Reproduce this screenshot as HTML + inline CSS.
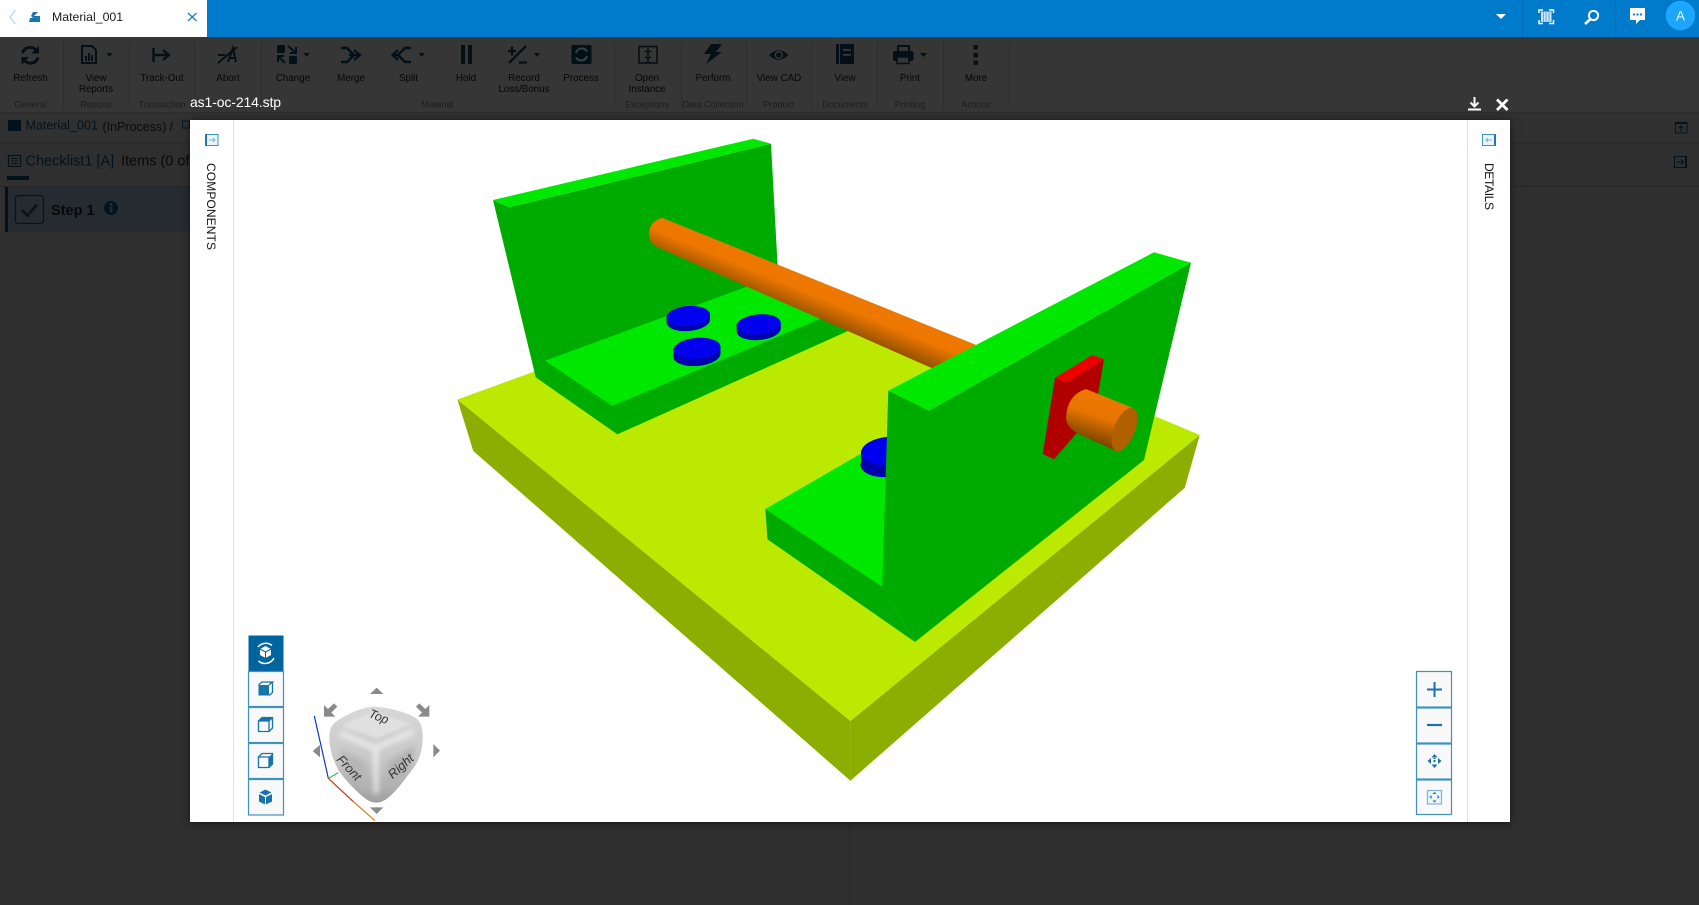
<!DOCTYPE html>
<html lang="en"><head><meta charset="utf-8"><title>as1-oc-214.stp</title>
<style>
html,body{margin:0;padding:0;width:1699px;height:905px;overflow:hidden;background:#2f2f2f}
svg{display:block;position:absolute;left:0;top:0;font-family:"Liberation Sans",sans-serif}
.d{position:absolute}
.l{font-size:9.8px;fill:#060606;text-anchor:middle}
.g{font-size:9px;fill:#1c1c1c;text-anchor:middle}
.i{fill:#031018}
.s{fill:none;stroke:#031018;stroke-width:3}
.c{fill:#1f1f1f}
.b{fill:#f9f9f9;stroke:#3f92bd;stroke-width:1.2}
.bi{fill:#1873a8}
.bs{fill:none;stroke:#1873a8;stroke-width:1.3}
</style></head><body>
<div class="d" style="left:0;top:37px;width:1699px;height:75px;background:#363636"></div>
<div class="d" style="left:0;top:112px;width:1699px;height:1px;background:#2c2c2c"></div>
<div class="d" style="left:0;top:113px;width:1699px;height:29px;background:#313131"></div>
<div class="d" style="left:0;top:142px;width:1699px;height:1px;background:#282828"></div>
<div class="d" style="left:0;top:186px;width:1699px;height:1px;background:#262626"></div>
<div class="d" style="left:849px;top:822px;width:1px;height:83px;background:#292929"></div>
<div class="d" style="left:0;top:0;width:1699px;height:37px;background:#007acb"></div>
<div class="d" style="left:0;top:0;width:207px;height:37px;background:#fff"></div>

<svg width="1699" height="905" viewBox="0 0 1699 905">
<!-- header -->
<path d="M15.5 10 L10 17 L15.5 24" fill="none" stroke="#bcd9ec" stroke-width="1.4"/>
<path d="M33 12 L38 12 L34 16 L40 16 L40 22 L29 22 L30 18 L33 18 L31 16 Z" fill="#1d75ad"/>
<text x="52" y="21" font-size="12.3" fill="#1b1b1b">Material_001</text>
<path d="M188 13 L196.5 21 M196.5 13 L188 21" stroke="#1f80bf" stroke-width="1.3" fill="none"/>
<rect x="1522" width="1" height="37" fill="#006eb6"/>
<rect x="1615" width="1" height="37" fill="#006eb6"/>
<path d="M1496 14 L1506 14 L1501 19 Z" fill="#fff"/>
<g fill="none" stroke="#fff" stroke-width="1.5"><path d="M1539 13 V10 H1543 M1549 10 H1553.5 V13 M1553.5 20 V23.5 H1549 M1543 23.5 H1539 V20"/></g>
<rect x="1541" y="11.5" width="10.5" height="10.5" fill="#cfe6f5"/>
<g fill="#5ba8da"><rect x="1543" y="11.5" width="1" height="10.5"/><rect x="1545.5" y="11.5" width="1" height="10.5"/><rect x="1548.5" y="11.5" width="1" height="10.5"/></g>
<circle cx="1593.5" cy="15.5" r="4.6" fill="none" stroke="#fff" stroke-width="2"/><path d="M1590 19.5 L1585 24" stroke="#fff" stroke-width="2.6" fill="none"/>
<path d="M1630 8 H1645 V20 H1640 L1636 24 V20 H1630 Z" fill="#fff"/>
<g fill="#007acb"><circle cx="1634" cy="14.5" r="1.1"/><circle cx="1637.5" cy="14.5" r="1.1"/><circle cx="1641" cy="14.5" r="1.1"/></g>
<circle cx="1680.5" cy="15.5" r="14.7" fill="#1ca6ff"/>
<text x="1680.5" y="20.5" font-size="13.5" fill="#fff" text-anchor="middle">A</text>

<!-- toolbar separators -->
<g fill="#2d2d2d"><rect x="63" y="41" width="1" height="67"/><rect x="129" y="41" width="1" height="67"/><rect x="194" y="41" width="1" height="67"/><rect x="261" y="41" width="1" height="67"/><rect x="614" y="41" width="1" height="67"/><rect x="681" y="41" width="1" height="67"/><rect x="746" y="41" width="1" height="67"/><rect x="811" y="41" width="1" height="67"/><rect x="877" y="41" width="1" height="67"/><rect x="943" y="41" width="1" height="67"/><rect x="1009" y="41" width="1" height="67"/></g>

<!-- toolbar icons -->
<path class="s" d="M22.5 53 A8 8 0 0 1 36.5 50.5 M38 57.5 A8 8 0 0 1 24 60"/><path class="i" d="M39 45.5 V53.5 H31.5 Z M21.5 65 V57 H29 Z"/>
<path class="s" d="M82 46 H92 L96 50 V63 H82 Z" style="stroke-width:2"/><rect class="i" x="85" y="56" width="2" height="5"/><rect class="i" x="88" y="53" width="2" height="8"/><rect class="i" x="91" y="55" width="2" height="6"/>
<path class="i" d="M106.5 53 H112.5 L109.5 57 Z"/>
<path class="s" style="stroke-width:2.4" d="M153.5 48 V62 M155 55 H168"/><path class="s" style="stroke-width:2.2" d="M163 50 L169 55 L163 60"/>
<path class="s" style="stroke-width:2" d="M218 63 L237 47 M218 55 H225 M228 62 L233 48 L236 62 M229 58 H235"/>
<rect class="i" x="277" y="45" width="8" height="8" rx="1.5"/><rect class="i" x="289" y="56" width="8" height="8" rx="1.5"/><path class="s" style="stroke-width:2" d="M288 46 L296 53 M296 47 V53 H290 M285 63 L278 56 M278 62 V56 H284"/>
<path class="i" d="M303.5 53 H310 L306.7 57 Z"/>
<path class="s" style="stroke-width:2.4" d="M341 48 H347 L354 55 L347 62 H341 M349 55 H359"/><path class="s" style="stroke-width:2.2" d="M354 50 L360 55 L354 60"/>
<path class="s" style="stroke-width:2.4" d="M398 55 L405 48 H411 M398 55 L405 62 H411 M394 55 H399"/><path class="s" style="stroke-width:2.2" d="M398 50 L392.5 55 L398 60"/>
<path class="i" d="M418.5 53 H425 L421.7 57 Z"/>
<rect class="i" x="461" y="45" width="4" height="19"/><rect class="i" x="468" y="45" width="4" height="19"/>
<path class="s" style="stroke-width:2.3" d="M508 51 H516 M512 46.5 V55.5 M509 63 L526 46 M519 62.5 H527"/>
<path class="i" d="M534 53 H540 L537 57 Z"/>
<rect class="i" x="571.5" y="45" width="20" height="19" rx="1.5"/><g fill="none" stroke="#36434c" stroke-width="2"><path d="M576 53 A6 6 0 0 1 587 51.5 M587 56 A6 6 0 0 1 576 57.5"/></g>
<rect x="639" y="46.5" width="18" height="16.5" fill="none" stroke="#031018" stroke-width="1.6"/><path d="M648 46 V50 M648 52 V56 M648 58 V63" stroke="#031018" stroke-width="1.6" fill="none"/><rect class="i" x="645" y="50.5" width="6" height="1.6"/><rect class="i" x="645" y="56.5" width="6" height="1.6"/>
<path class="i" d="M711 44 H722 L716 52 H722 L706 64 L711 54 H704 Z"/>
<path class="i" d="M769 55 Q778.5 45.5 788.5 55 Q778.5 64.5 769 55 Z"/><circle cx="778.8" cy="55" r="4.2" fill="#363636"/><circle cx="778.8" cy="55" r="2.6" fill="#031018"/>
<rect class="i" x="836" y="44" width="3" height="20"/><rect class="i" x="840" y="44" width="14" height="20"/><rect x="843" y="49" width="8" height="1.8" fill="#363636"/><rect x="843" y="54" width="8" height="1.8" fill="#363636"/>
<rect x="898" y="46" width="11" height="6" fill="none" stroke="#031018" stroke-width="2"/><rect class="i" x="893" y="51" width="20.5" height="10" rx="2"/><rect x="897" y="57" width="12" height="6.5" fill="#363636" stroke="#031018" stroke-width="1.5"/>
<path class="i" d="M920 53 H927 L923.5 57 Z"/>
<rect class="i" x="973.5" y="45" width="4.4" height="4.4"/><rect class="i" x="973.5" y="53" width="4.4" height="4.4"/><rect class="i" x="973.5" y="60.5" width="4.4" height="4.4"/>

<!-- toolbar labels -->
<text class="l" x="30.5" y="81">Refresh</text>
<text class="l" x="96" y="81">View</text><text class="l" x="96" y="92">Reports</text>
<text class="l" x="162" y="81">Track-Out</text>
<text class="l" x="228" y="81">Abort</text>
<text class="l" x="293" y="81">Change</text>
<text class="l" x="351" y="81">Merge</text>
<text class="l" x="408.5" y="81">Split</text>
<text class="l" x="466" y="81">Hold</text>
<text class="l" x="524" y="81">Record</text><text class="l" x="524" y="92">Loss/Bonus</text>
<text class="l" x="581" y="81">Process</text>
<text class="l" x="647" y="81">Open</text><text class="l" x="647" y="92">Instance</text>
<text class="l" x="713" y="81">Perform</text>
<text class="l" x="779" y="81">View CAD</text>
<text class="l" x="845" y="81">View</text>
<text class="l" x="910" y="81">Print</text>
<text class="l" x="976" y="81">More</text>
<text class="g" x="30.5" y="107.5">General</text>
<text class="g" x="96" y="107.5">Reports</text>
<text class="g" x="162" y="107.5">Transaction</text>
<text class="g" x="437.5" y="107.5">Material</text>
<text class="g" x="647" y="107.5">Exceptions</text>
<text class="g" x="713" y="107.5">Data Collection</text>
<text class="g" x="779" y="107.5">Product</text>
<text class="g" x="845" y="107.5">Documents</text>
<text class="g" x="910" y="107.5">Printing</text>
<text class="g" x="976" y="107.5">Actions</text>

<!-- breadcrumb + checklist -->
<rect x="8" y="120" width="13" height="11" fill="#01121d"/>
<text x="25.5" y="129.5" font-size="12.5" fill="#04121b">Material_001</text>
<text x="102.5" y="131" font-size="12.5" fill="#0a0a0a">(InProcess)</text>
<text x="169.5" y="131" font-size="12.5" fill="#0a0a0a">/</text>
<rect x="182.5" y="121" width="7" height="7" fill="none" stroke="#04121b" stroke-width="1"/>
<rect x="8.5" y="155.5" width="12" height="11" fill="none" stroke="#06121a" stroke-width="1.2"/><path d="M11 158.5 H18 M11 161 H18 M11 163.5 H18" stroke="#06121a" stroke-width="1"/>
<text x="25.5" y="165.5" font-size="14.5" fill="#04121b">Checklist1 [A]</text>
<text x="121" y="165.5" font-size="14.5" fill="#080808">Items (0 of</text>
<rect x="7" y="176" width="22" height="4" fill="#02121c"/>
<rect x="5" y="187" width="185" height="45" fill="#252b30"/>
<rect x="5" y="187" width="3" height="45" fill="#02121c"/>
<rect x="15.5" y="195.5" width="28" height="28" rx="3" fill="none" stroke="#03141e" stroke-width="1.2"/>
<path d="M22 210 L27.5 215.5 L37 204.5" fill="none" stroke="#03141e" stroke-width="2.6"/>
<text x="51" y="215" font-size="14.5" font-weight="bold" fill="#080808">Step 1</text>
<circle cx="111" cy="208" r="7" fill="#03141e"/><rect x="109.8" y="206.5" width="2.6" height="6" fill="#252b30"/><rect x="109.8" y="203" width="2.6" height="2.4" fill="#252b30"/>

<!-- right bg icons -->
<rect x="1675.5" y="122.5" width="11.5" height="10.5" fill="none" stroke="#04121b" stroke-width="1"/><rect x="1675" y="122" width="12" height="2" fill="#04121b"/><path d="M1681 132 V126 M1678.5 128.5 L1681 126 L1683.5 128.5" stroke="#04121b" fill="none"/>
<rect x="1674.5" y="156.5" width="11.5" height="11" fill="none" stroke="#04121b" stroke-width="1"/><rect x="1685" y="156" width="2" height="12" fill="#04121b"/><path d="M1677 162 H1683 M1681 159.5 L1683.5 162 L1681 164.5" stroke="#04121b" fill="none"/>

<!-- modal chrome -->
<text x="190" y="107" font-size="14" fill="#fff" textLength="91">as1-oc-214.stp</text>
<path d="M1474.5 97 V106 M1470.5 102.5 L1474.5 106.5 L1478.5 102.5" fill="none" stroke="#fff" stroke-width="2"/><rect x="1468" y="108.5" width="13" height="2" fill="#fff"/>
<path d="M1497 99.5 L1507.5 110 M1507.5 99.5 L1497 110" stroke="#fff" stroke-width="2.8"/>
</svg>

<div class="d" style="left:190px;top:120px;width:1320px;height:702px;background:#fff;box-shadow:0 1px 8px rgba(0,0,0,.55)"></div>

<svg width="1699" height="905" viewBox="0 0 1699 905">
<defs>
<linearGradient id="rod" gradientUnits="userSpaceOnUse" x1="850" y1="293" x2="836" y2="327"><stop offset="0" stop-color="#ee7700"/><stop offset=".42" stop-color="#ee7700"/><stop offset="1" stop-color="#985400"/></linearGradient>
<linearGradient id="stub" gradientUnits="userSpaceOnUse" x1="1102" y1="396" x2="1088" y2="440"><stop offset="0" stop-color="#ee7700"/><stop offset=".45" stop-color="#e87400"/><stop offset="1" stop-color="#7a4600"/></linearGradient>
<linearGradient id="cb" x1="0" y1="0" x2="0" y2="1"><stop offset="0" stop-color="#d8d8d8"/><stop offset=".55" stop-color="#c8c8c8"/><stop offset="1" stop-color="#a0a0a0"/></linearGradient>
<filter id="bl" x="-40%" y="-40%" width="180%" height="180%"><feGaussianBlur stdDeviation="8"/></filter>
<filter id="bl2" x="-30%" y="-30%" width="160%" height="160%"><feGaussianBlur stdDeviation="4"/></filter>
</defs>
<rect x="233" y="120" width="1" height="702" fill="#e2e2e2"/>
<rect x="1467" y="120" width="1" height="702" fill="#e2e2e2"/>
<rect x="205.5" y="134.5" width="12.5" height="11" fill="#eef5fa" stroke="#3f92bd" stroke-width="1"/><rect x="205" y="134" width="2" height="12" fill="#1d7ab3"/><path d="M209 140 H215 M213 138 L215 140 L213 142" stroke="#7fb3d2" fill="none"/>
<rect x="1482.5" y="134.5" width="13" height="11" fill="#eef5fa" stroke="#3f92bd" stroke-width="1"/><rect x="1494" y="134" width="2" height="12" fill="#1d7ab3"/><path d="M1492 140 H1486 M1488 138 L1486 140 L1488 142" stroke="#7fb3d2" fill="none"/>
<text transform="translate(207,163) rotate(90)" font-size="12" fill="#111" textLength="87">COMPONENTS</text>
<text transform="translate(1485,163) rotate(90)" font-size="12" fill="#111" textLength="47">DETAILS</text>

<!-- model: base -->
<polygon points="457.4,399.5 473.3,451 850.4,780.7 850.4,721" fill="#8cae00"/>
<polygon points="850.4,721 850.4,780.7 1184.8,487.7 1199.7,435" fill="#8cae00"/>
<polygon points="457.4,399.5 533,372 760,290 860,320 1157,417 1199.7,435 850.4,721" fill="#bbe900"/>

<!-- left bracket -->
<polygon points="493,200 509,207.3 771,143.7 777.5,264 850,330 617.3,434.3 535.7,377.3" fill="#00ab00"/>
<polygon points="493,200 753.3,138.7 771,143.7 509,207.3" fill="#00e800"/>
<polygon points="545,360.7 746.7,286.7 830,315 612.3,406" fill="#00e800"/>
<polygon points="830,315 850,330 617.3,434.3 612.3,406" fill="#00ab00"/>

<!-- left discs -->
<g>
<path d="M666.6 316 V322 A21.7 10 -5 0 0 710 320 V314 Z" fill="#0000ac"/><ellipse cx="688.3" cy="316" rx="21.7" ry="10" transform="rotate(-5 688.3 316)" fill="#0000ee"/>
<path d="M736.7 324 V331 A22 10 -5 0 0 780.7 329 V322 Z" fill="#0000ac"/><ellipse cx="758.7" cy="324.3" rx="22" ry="10" transform="rotate(-5 758.7 324.3)" fill="#0000ee"/>
<path d="M673.5 349 V357 A23.5 10.5 -5 0 0 720.5 354 V346 Z" fill="#0000ac"/><ellipse cx="697" cy="348.3" rx="23.5" ry="10.5" transform="rotate(-5 697 348.3)" fill="#0000ee"/>
</g>

<!-- long rod -->
<path d="M662 217.7 Q649 222 649 234 Q649.5 244 657 247 L935 369.5 L980 346.5 Z" fill="url(#rod)"/>

<!-- right bracket foot -->
<polygon points="765.4,509 850,460 888,438 888,600 882.3,586.7" fill="#00e800"/>
<polygon points="765.4,509 767.4,539.3 915,642 882.3,586.7" fill="#00ab00"/>
<path d="M861 452 V462 A27 14 -5 0 0 888 477 H895 V445 Z" fill="#0000ac"/>
<ellipse cx="888" cy="451" rx="27" ry="14" transform="rotate(-5 888 451)" fill="#0000ee"/>

<!-- right wall -->
<polygon points="888.3,390.7 929,410.7 1191,262.7 1144,460 915,642 882.3,586.7" fill="#00ab00"/>
<polygon points="888.3,390.7 1154,252.3 1191,262.7 929,410.7" fill="#00e800"/>

<!-- red plate -->
<polygon points="1055,377.7 1067.3,382.7 1104,359.3 1095,412 1054,459.3 1042.7,454" fill="#b00000"/>
<polygon points="1055,377.7 1092.3,355 1104,359.3 1067.3,382.7" fill="#ee0000"/>

<!-- stub -->
<path d="M1086 389 L1133 408 L1116 451 L1085 437 Q1067 430 1066 418 Q1067 395 1086 389 Z" fill="url(#stub)"/>
<ellipse cx="1124.5" cy="429.5" rx="10.5" ry="23" transform="rotate(22 1124.5 429.5)" fill="#b06000"/>

<!-- view buttons left -->
<rect x="248.5" y="635.5" width="35" height="36" fill="#00649f"/>
<rect class="b" x="248.5" y="671.5" width="35" height="35"/>
<rect class="b" x="248.5" y="707.5" width="35" height="35"/>
<rect class="b" x="248.5" y="743.5" width="35" height="35"/>
<rect class="b" x="248.5" y="779.5" width="35" height="35.5"/>
<path d="M265.5 646 L271 649 V655 L265.5 658 L260 655 V649 Z" fill="#fff"/>
<path d="M260 649 L265.5 652 L271 649 M265.5 652 V658" stroke="#00649f" fill="none"/>
<path d="M258 647 A10 10 0 0 1 272 645.5 M274 658 A10 10 0 0 1 258.5 661" fill="none" stroke="#fff" stroke-width="1.5"/>
<path d="M258.5 685 H269 V695.5 H258.5 Z" fill="#1873a8"/><path class="bs" d="M258.5 685 L262 682 H272.5 L269 685 M272.5 682 V692.5 L269 695.5"/>
<path class="bs" d="M258.5 721 H269 V731.5 H258.5 Z M258.5 721 L262 717.5 H272.5 V728 L269 731.5 M269 721 L272.5 717.5"/><path d="M258.5 721 L262 717.5 H272.5 L269 721 Z" fill="#1873a8"/>
<path class="bs" d="M258.5 757 H269 V767.5 H258.5 Z M258.5 757 L262 753.5 H272.5 V764 L269 767.5"/><path d="M269 757 L272.5 753.5 V764 L269 767.5 Z" fill="#1873a8"/>
<path class="bi" d="M265.5 789.5 L271.5 792.5 L265.5 795.5 L259.5 792.5 Z M259 794 L265 797 V804.5 L259 801.5 Z M272 794 L266 797 V804.5 L272 801.5 Z"/>

<!-- nav cube -->
<g transform="translate(230,620) scale(.33333)">
<path d="M253 288 L295 475" stroke="#0a2fd0" stroke-width="3.5" fill="none"/>
<path d="M295 475 L325 458" stroke="#33c233" stroke-width="3.5" fill="none"/>
<path d="M295 475 L370 545" stroke="#d03010" stroke-width="3.5" fill="none"/>
<path d="M370 545 L435 602" stroke="#d27a10" stroke-width="3.5" fill="none"/>
<path d="M312 310 C335 290 390 264 425 260 C470 260 535 278 560 296 C575 308 580 335 578 365 C575 400 565 425 548 447 C520 485 490 525 465 540 C445 552 425 550 405 535 C380 515 345 480 325 450 C305 415 297 375 298 345 C299 330 303 320 312 310 Z" fill="url(#cb)"/>
<polygon points="335,318 425,275 545,312 440,355" fill="#e0e0e0" filter="url(#bl2)"/>
<polygon points="325,385 405,425 415,520 350,445" fill="#b6b6b6" filter="url(#bl)"/>
<polygon points="475,425 558,375 535,445 470,520" fill="#b2b2b2" filter="url(#bl)"/>
<path d="M435 385 L330 340 M435 385 L550 335 M437 385 L438 520" stroke="#f4f4f4" stroke-width="16" fill="none" opacity=".75" filter="url(#bl)"/>
<text transform="translate(414,290) rotate(22)" font-size="37" font-style="italic" fill="#333">Top</text>
<text transform="translate(318,420) rotate(47)" font-size="38" font-style="italic" fill="#333">Front</text>
<text transform="translate(488,478) rotate(-42)" font-size="38" font-style="italic" fill="#333">Right</text>
<g fill="#8a8a8a">
<path d="M440 203 L460 222 H420 Z"/>
<path d="M420 562 H460 L440 582 Z"/>
<path d="M270 375 V412 L248 393 Z"/>
<path d="M610 372 V412 L630 392 Z"/>
<path d="M282 290 V255 L294 267 L312 250 L322 260 L304 278 L316 290 Z"/>
<path d="M598 290 V255 L586 267 L568 250 L558 260 L576 278 L564 290 Z"/>
</g>
</g>

<!-- zoom buttons right -->
<rect class="b" x="1416.5" y="671.5" width="35" height="35.5"/>
<rect class="b" x="1416.5" y="708" width="35" height="35"/>
<rect class="b" x="1416.5" y="744" width="35" height="35"/>
<rect class="b" x="1416.5" y="780" width="35" height="34.5"/>
<path d="M1427 689.5 H1442 M1434.5 682 V697" stroke="#1873a8" stroke-width="2" fill="none"/>
<path d="M1427 725 H1442" stroke="#1873a8" stroke-width="2.2" fill="none"/>
<path class="bi" d="M1434.5 754 L1437.5 757.5 H1431.5 Z M1434.5 768 L1437.5 764.5 H1431.5 Z M1427.5 761 L1431 758 V764 Z M1441.5 761 L1438 758 V764 Z"/>
<rect class="bi" x="1433.5" y="760" width="2" height="2"/><rect class="bi" x="1433.5" y="758" width="2" height="1"/>
<rect x="1427.5" y="790.5" width="14" height="13.5" fill="#eef5fa" stroke="#7fb3d2" stroke-width="1.2"/>
<path class="bi" d="M1434.5 792 L1436.5 794 H1432.5 Z M1434.5 802.5 L1436.5 800.5 H1432.5 Z M1429.5 797 L1431.5 795 V799 Z M1439.5 797 L1437.5 795 V799 Z"/>
</svg>
</body></html>
